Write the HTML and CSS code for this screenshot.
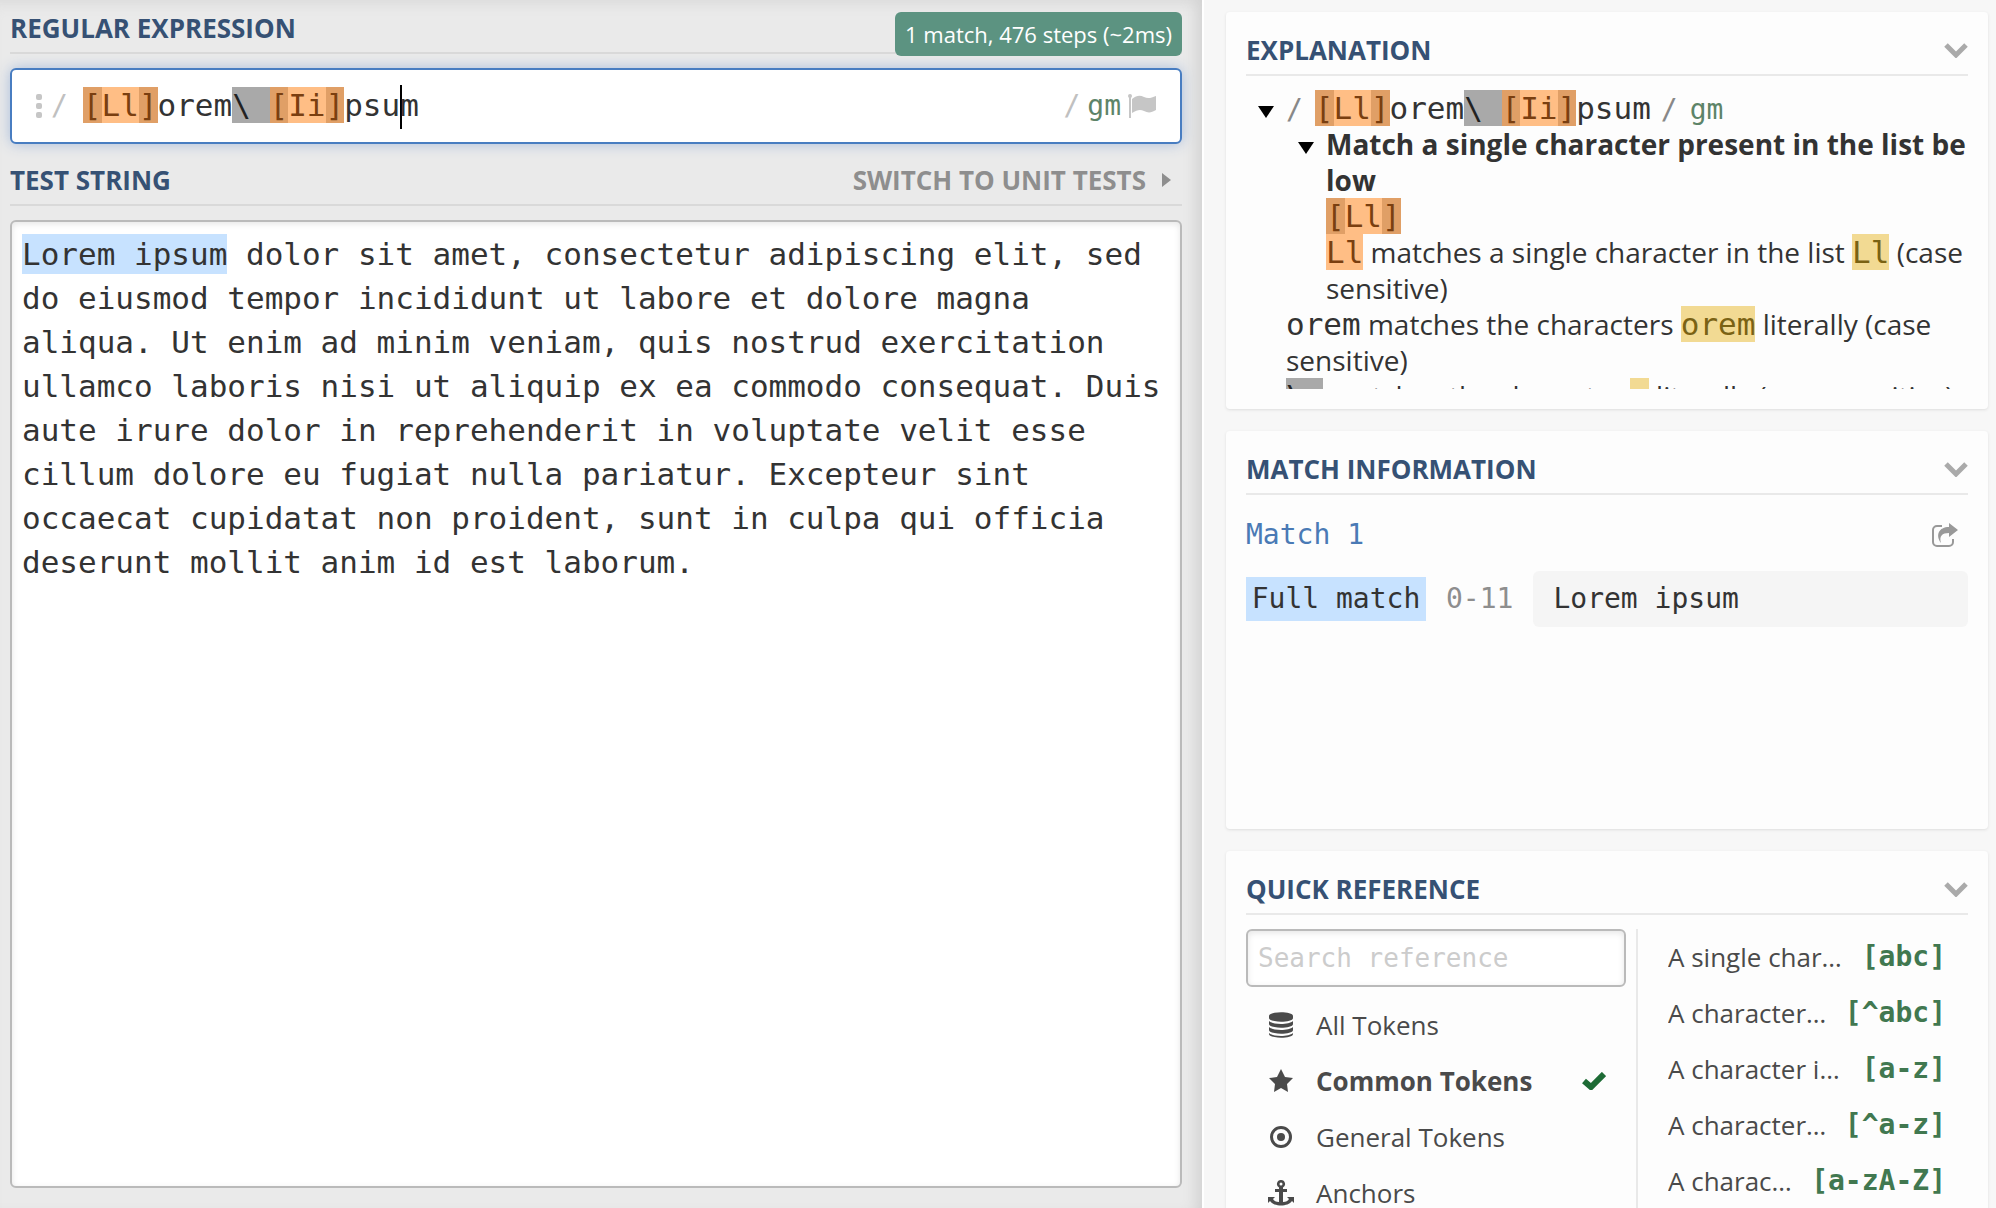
FILE: index.html
```html
<!DOCTYPE html>
<html lang="en">
<head>
    <meta charset="UTF-8">
    <meta name="viewport" content="width=device-width, initial-scale=1.0">
    <title>Regex tester</title>
    <link rel="stylesheet" href="styles.css">
</head>
<body>
    <div class="container">
        <main class="left-side">
            <div class="section-head">
                <h2 id="regex-label">Regular Expression</h2>
                <span class="result">1 match, 476 steps (~2ms)</span>
            </div>
            <div class="regex-box">
                <button class="dots" aria-label="Delimiter"><i></i><i></i><i></i></button>
                <span class="delimiter">/</span>
                <div class="regex" contenteditable="true" role="textbox" aria-labelledby="regex-label" spellcheck="false"><span class="bracket">[</span><span class="set">Ll</span><span class="bracket">]</span>orem<span class="escape">\ </span><span class="bracket">[</span><span class="set">Ii</span><span class="bracket">]</span>psu<span class="caret"></span>m</div>
                <span class="delimiter">/</span>
                <button class="flags" aria-label="Flags">gm
                    <svg width="28" height="24" viewBox="0 0 28 24"><circle cx="2" cy="2" r="2"/><path d="M1 3h2v21H1zM4 5c5-4 8-4 12-2 4 2 7 1 12-1v14c-5 3-8 3-12 1s-7-1-12 2z"/></svg>
                </button>
            </div>

            <div class="section-head test-head">
                <h2><label for="test">Test String</label></h2>
                <a href="#" class="switch">Switch to unit tests <svg width="9" height="14" viewBox="0 0 9 14"><path d="M0 0l9 7-9 7z"/></svg></a>
            </div>
            <textarea id="test" class="test-string" spellcheck="false">Lorem ipsum dolor sit amet, consectetur adipiscing elit, sed do eiusmod tempor incididunt ut labore et dolore magna aliqua. Ut enim ad minim veniam, quis nostrud exercitation ullamco laboris nisi ut aliquip ex ea commodo consequat. Duis aute irure dolor in reprehenderit in voluptate velit esse cillum dolore eu fugiat nulla pariatur. Excepteur sint occaecat cupidatat non proident, sunt in culpa qui officia deserunt mollit anim id est laborum.</textarea>
        </main>

        <aside class="right-side">
            <section class="panel">
                <div class="section-head">
                    <h2>Explanation</h2>
                    <button class="toggle" aria-label="Collapse explanation"><svg width="24" height="15" viewBox="0 0 24 15"><path d="M2 2l10 10L22 2"/></svg></button>
                </div>
                <div class="explanation">
                    <details open>
                        <summary><span class="slash">/</span><code><span class="bracket">[</span><span class="set">Ll</span><span class="bracket">]</span>orem<span class="escape">\ </span><span class="bracket">[</span><span class="set">Ii</span><span class="bracket">]</span>psum</code><span class="slash end">/</span><span class="mode">gm</span></summary>
                        <details open class="nested">
                            <summary><b>Match a single character present in the list below</b></summary>
                            <p><code><span class="bracket">[</span><span class="set">Ll</span><span class="bracket">]</span></code></p>
                            <p><code class="set">Ll</code> matches a single character in the list <code class="literal">Ll</code> (case sensitive)</p>
                        </details>
                        <p><code>orem</code> matches the characters <code class="literal">orem</code> literally (case sensitive)</p>
                        <p><code class="escape">\ </code> matches the character <code class="literal">&nbsp;</code> literally (case sensitive)</p>
                    </details>
                </div>
            </section>

            <section class="panel">
                <div class="section-head">
                    <h2>Match Information</h2>
                    <button class="toggle" aria-label="Collapse match information"><svg width="24" height="15" viewBox="0 0 24 15"><path d="M2 2l10 10L22 2"/></svg></button>
                </div>
                <div class="match-info">
                    <div class="match-title">
                        <span>Match 1</span>
                        <button class="share" aria-label="Export match"><svg width="26" height="24" viewBox="0 0 26 24"><path class="frame" d="M10 3H5a4 4 0 0 0-4 4v12a4 4 0 0 0 4 4h12a4 4 0 0 0 4-4v-3"/><path d="M17 0l9 7-9 7v-4c-7 0-10 3-8 10C3 12 7 4 17 4z"/></svg></button>
                    </div>
                    <table class="matches">
                        <tr>
                            <th scope="row"><span>Full match</span></th>
                            <td class="range">0-11</td>
                            <td class="value">Lorem ipsum</td>
                        </tr>
                    </table>
                </div>
            </section>

            <section class="panel">
                <div class="section-head">
                    <h2>Quick Reference</h2>
                    <button class="toggle" aria-label="Collapse quick reference"><svg width="24" height="15" viewBox="0 0 24 15"><path d="M2 2l10 10L22 2"/></svg></button>
                </div>
                <div class="reference">
                    <div class="categories">
                        <input type="text" class="search" placeholder="Search reference" aria-label="Search reference">
                        <ul>
                            <li>
                                <svg width="26" height="26" viewBox="0 0 26 26"><path d="M1 4c0-5 24-5 24 0v2c0 5-24 5-24 0zM1 9c4 4 20 4 24 0v3c0 5-24 5-24 0zM1 15c4 4 20 4 24 0v3c0 5-24 5-24 0zM1 21c4 4 20 4 24 0v1c0 5-24 5-24 0z"/></svg>
                                <span>All Tokens</span>
                            </li>
                            <li class="active">
                                <svg width="26" height="26" viewBox="0 0 26 26"><path d="M13 1l4 8 8 1-6 6 1 8-7-4-7 4 1-8-6-6 8-1z"/></svg>
                                <span>Common Tokens</span>
                                <svg class="check" width="24" height="18" viewBox="0 0 24 18"><path d="M2 9l7 6L22 2"/></svg>
                            </li>
                            <li>
                                <svg width="26" height="26" viewBox="0 0 26 26"><circle class="ring" cx="13" cy="13" r="9.5"/><circle cx="13" cy="13" r="4"/></svg>
                                <span>General Tokens</span>
                            </li>
                            <li>
                                <svg width="26" height="26" viewBox="0 0 26 26"><path fill-rule="evenodd" d="M13 0a4 4 0 0 1 2 7.500V9h4v3h-4v10c3 0 5-1 6-3l-2-2h7v6l-2-2c-4 6-18 6-22 0l-2 2v-6h7l-2 2c1 2 3 3 6 3V12H7V9h4V7.500A4 4 0 0 1 13 0zm0 2.500a1.500 1.500 0 1 0 0 3 1.500 1.500 0 0 0 0-3z"/></svg>
                                <span>Anchors</span>
                            </li>
                        </ul>
                    </div>
                    <ul class="tokens">
                        <li><span>A single character of: a, b or c</span><code>[abc]</code></li>
                        <li><span>A character except: a, b or c</span><code>[^abc]</code></li>
                        <li><span>A character in the range: a-z</span><code>[a-z]</code></li>
                        <li><span>A character not in the range: a-z</span><code>[^a-z]</code></li>
                        <li><span>A character in the range: a-z or A-Z</span><code>[a-zA-Z]</code></li>
                    </ul>
                </div>
            </section>
        </aside>
    </div>
</body>
</html>
```
FILE: styles.css
```css
*{
    margin: 0;
    padding: 0;
    box-sizing: border-box;
}
body{
    font-family: "Open Sans", sans-serif;
    font-size: 26px;
    line-height: 36px;
    color: #333;
    background-color: #f7f7f7;
    overflow: hidden;
}
button{
    border: none;
    background: none;
    font: inherit;
    cursor: pointer;
}
ul{
    list-style: none;
}
svg{
    display: block;
    flex: none;
    fill: currentColor;
}
code,
.regex-box,
.test-string,
.match-info,
.search,
.mode,
.slash{
    font-family: "DejaVu Sans Mono", monospace;
}
.container{
    display: grid;
    grid-template-columns: minmax(0, 601fr) minmax(0, 397fr);
    height: 100vh;
}

/* headings */
.section-head{
    position: relative;
    display: flex;
    justify-content: space-between;
    align-items: center;
    padding-bottom: 6px;
    border-bottom: 2px solid #e9e9e9;
    margin-bottom: 14px;
}
.section-head h2{
    font-size: 26px;
    font-weight: bold;
    color: #365174;
    text-transform: uppercase;
}
.toggle{
    color: #aaa;
}
.toggle path{
    fill: none;
    stroke: currentColor;
    stroke-width: 5;
}

/* left side */
.left-side{
    display: flex;
    flex-direction: column;
    padding: 0 20px 20px 10px;
    background-color: #eaeaea;
    box-shadow: inset -14px 0 14px -8px #d2d2d2, inset 0 14px 14px -10px #dcdcdc;
}
.left-side .section-head{
    padding-top: 10px;
    border-color: #d9d9d9;
}
.left-side .test-head{
    margin-top: 8px;
}
.result{
    position: absolute;
    top: 12px;
    right: 0;
    padding: 0 10px;
    border-radius: 6px;
    background-color: #5c9381;
    color: #fff;
    font-size: 22px;
    line-height: 44px;
}
.switch{
    display: flex;
    align-items: center;
    gap: 16px;
    padding-right: 11px;
    color: #8e8e8e;
    font-weight: bold;
    text-transform: uppercase;
    text-decoration: none;
}
.regex-box{
    display: flex;
    align-items: center;
    height: 76px;
    padding: 0 24px;
    border: 2px solid #487dc1;
    border-radius: 6px;
    background-color: #fff;
    box-shadow: 0 0 14px #a9bddb;
    font-size: 28px;
}
.dots{
    display: grid;
    gap: 3px;
    margin-right: 9px;
}
.dots i{
    width: 6px;
    height: 6px;
    border-radius: 2px;
    background-color: #c6c6c6;
}
.delimiter{
    color: #c0c0c0;
}
.regex{
    flex: 1;
    margin-left: 15px;
    font-size: 31px;
    white-space: pre;
    outline: none;
}
.caret{
    display: inline-block;
    width: 2px;
    height: 44px;
    margin: -4px -2px -4px 0;
    vertical-align: middle;
    background-color: #000;
}
.flags{
    display: flex;
    align-items: center;
    gap: 7px;
    margin-left: 7px;
    color: #5d8468;
}
.flags svg{
    color: #c6c6c6;
}
.bracket{
    background-color: #e09f66;
    color: #7a3f10;
}
.set{
    background-color: #ffbe85;
    color: #7a3f10;
}
.escape{
    background-color: #a9a9a9;
    color: #222;
    white-space: pre;
}
.literal{
    background-color: #f2da93;
    color: #7a6214;
}
.test-string{
    flex: 1;
    padding: 10px;
    border: 2px solid #bababa;
    border-radius: 6px;
    /* highlight behind the 11 matched characters */
    background: linear-gradient(#c7e2ff, #c7e2ff) 10px 12px / 11ch 40px no-repeat #fff;
    box-shadow: inset 0 2px 6px #e6e6e6;
    color: #333;
    font-size: 31px;
    line-height: 44px;
    resize: none;
    outline: none;
}

/* right side */
.right-side{
    padding: 12px 8px 0 22px;
    border-left: 2px solid #fff;
    overflow: hidden;
}
.panel{
    padding: 20px;
    margin-bottom: 22px;
    border-radius: 4px;
    background-color: #fdfdfd;
    box-shadow: 0 1px 3px #dedede;
}
.explanation{
    height: 299px;
    padding-left: 40px;
    overflow: hidden;
    font-size: 28px;
}
.explanation code{
    font-size: 31px;
}
/* keeps the mono spans from stretching the rows */
.explanation code,
.slash,
.mode{
    line-height: 30px;
}
.explanation summary{
    position: relative;
    list-style: none;
    cursor: pointer;
}
.explanation summary::before{
    content: "";
    position: absolute;
    left: -28px;
    top: 16px;
    border: 8px solid transparent;
    border-top: 12px solid #000;
    border-bottom: none;
}
.explanation b{
    word-break: break-all;
}
.nested{
    padding-left: 40px;
}
.slash{
    margin-right: 12px;
    color: #888;
}
.slash.end{
    margin: 0 12px 0 10px;
}
.mode{
    color: #5d8468;
}
.match-info{
    min-height: 300px;
    padding-top: 8px;
    font-size: 28px;
}
.match-title{
    display: flex;
    justify-content: space-between;
    align-items: center;
    margin-bottom: 18px;
    padding-right: 10px;
    color: #4a7ab5;
}
.share{
    color: #999;
}
.share .frame{
    fill: none;
    stroke: currentColor;
    stroke-width: 2;
}
.matches{
    width: 100%;
    border-collapse: collapse;
    white-space: nowrap;
}
.matches th{
    width: 180px;
    font-weight: normal;
}
.matches th span{
    display: block;
    padding: 0 5px;
    background-color: #c7e2ff;
    line-height: 44px;
}
.range{
    width: 107px;
    padding: 0 20px;
    color: #8e8e8e;
}
.value{
    height: 56px;
    padding: 0 20px;
    border-radius: 6px;
    background-color: #f5f5f5;
}
.reference{
    display: flex;
    color: #4a4a4a;
}
.categories{
    width: 390px;
    padding-right: 10px;
    flex: none;
}
.search{
    width: 100%;
    height: 58px;
    margin-bottom: 10px;
    padding: 0 10px;
    border: 2px solid #bababa;
    border-radius: 6px;
    background-color: #fff;
    box-shadow: inset 0 2px 6px #e6e6e6;
    font-size: 26px;
}
.search::placeholder{
    color: #ccc;
}
.categories ul{
    padding: 0 20px 0 22px;
}
.categories li{
    display: flex;
    align-items: center;
    gap: 22px;
    height: 56px;
}
.active{
    font-weight: bold;
}
.check{
    margin-left: auto;
    color: #1d6b35;
}
.check path{
    fill: none;
    stroke: currentColor;
    stroke-width: 6;
}
.ring{
    fill: none;
    stroke: currentColor;
    stroke-width: 3;
}
.tokens{
    flex: 1;
    min-width: 0;
    padding: 0 22px 0 30px;
    border-left: 2px solid #e9e9e9;
}
.tokens li{
    display: flex;
    align-items: center;
    justify-content: space-between;
    gap: 16px;
    height: 56px;
}
.tokens span{
    overflow: hidden;
    white-space: nowrap;
    text-overflow: ellipsis;
}
.tokens code{
    flex: none;
    color: #417850;
    font-size: 28px;
    font-weight: bold;
    white-space: nowrap;
}
```
